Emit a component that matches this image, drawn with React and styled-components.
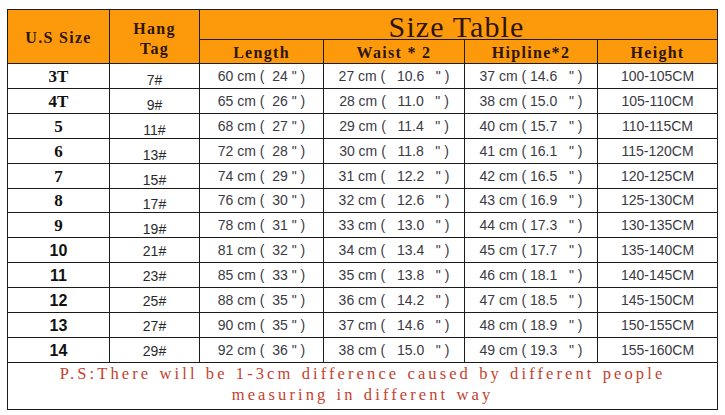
import React from 'react'
import styled, { createGlobalStyle } from 'styled-components'

const GlobalStyle = createGlobalStyle`
  html, body {
    margin: 0;
    padding: 0;
    background: #ffffff;
  }
`

const Page = styled.div`
  padding: 9px 0 0 7px;
`

const Grid = styled.div`
  display: grid;
  grid-template-columns: 102px 90px 124px 141px 133px 120px;
  grid-template-rows: 30px 24px repeat(12, 24.92px) 47px;
  width: 710px;
  border-top: 1px solid #1c1c1c;
  border-left: 1px solid #1c1c1c;
`

const Cell = styled.div`
  box-sizing: border-box;
  border-right: 1px solid #1c1c1c;
  border-bottom: 1px solid #1c1c1c;
  display: flex;
  align-items: center;
  justify-content: center;
  white-space: pre;
  overflow: hidden;
`

const HeadCell = styled(Cell)`
  background: #fd9a0c;
  color: #2e1503;
  font-family: "Liberation Serif", serif;
  font-weight: bold;
  font-size: 16px;
  letter-spacing: 1.3px;
  line-height: 20px;
  text-align: center;
  grid-row: ${({ $rows }) => $rows || 'auto'};
  grid-column: ${({ $cols }) => $cols || 'auto'};
  padding-top: ${({ $pt }) => $pt || 0}px;
`

const Title = styled(HeadCell)`
  font-weight: normal;
  font-size: 30px;
  line-height: 27px;
  letter-spacing: 1.1px;
  overflow: visible;
  padding: 3px 4px 0 0;
`

const SizeCell = styled(Cell)`
  font-family: ${({ $old }) => ($old ? '"Liberation Serif", serif' : '"Liberation Sans", sans-serif')};
  font-weight: bold;
  font-size: ${({ $old }) => ($old ? 17 : 16)}px;
  color: #111;
  padding-top: 2px;
`

const TagCell = styled(Cell)`
  font-family: "Liberation Sans", sans-serif;
  font-size: 14px;
  color: #2a2a2a;
  padding-top: ${({ $old }) => ($old ? 8 : 2)}px;
`

const MeasureCell = styled(Cell)`
  font-family: "Liberation Sans", sans-serif;
  font-size: 14px;
  color: #3a3a44;
`

const Note = styled.div`
  grid-column: 1 / -1;
  box-sizing: border-box;
  border-right: 1px solid #1c1c1c;
  border-bottom: 1px solid #1c1c1c;
  padding-top: 0;
  font-family: "Liberation Serif", serif;
  font-size: 16.5px;
  letter-spacing: 3.1px;
  word-spacing: 1px;
  line-height: 21px;
  color: #c5412e;
  text-align: center;
`

const rows = [
  ['3T', '7#', '60 cm (  24 " )', '27 cm (   10.6   " )', '37 cm ( 14.6   " )', '100-105CM', true],
  ['4T', '9#', '65 cm (  26 " )', '28 cm (   11.0   " )', '38 cm ( 15.0   " )', '105-110CM', true],
  ['5', '11#', '68 cm (  27 " )', '29 cm (   11.4   " )', '40 cm ( 15.7   " )', '110-115CM', true],
  ['6', '13#', '72 cm (  28 " )', '30 cm (   11.8   " )', '41 cm ( 16.1   " )', '115-120CM', true],
  ['7', '15#', '74 cm (  29 " )', '31 cm (   12.2   " )', '42 cm ( 16.5   " )', '120-125CM', true],
  ['8', '17#', '76 cm (  30 " )', '32 cm (   12.6   " )', '43 cm ( 16.9   " )', '125-130CM', true],
  ['9', '19#', '78 cm (  31 " )', '33 cm (   13.0   " )', '44 cm ( 17.3   " )', '130-135CM', true],
  ['10', '21#', '81 cm (  32 " )', '34 cm (   13.4   " )', '45 cm ( 17.7   " )', '135-140CM', false],
  ['11', '23#', '85 cm (  33 " )', '35 cm (   13.8   " )', '46 cm ( 18.1   " )', '140-145CM', false],
  ['12', '25#', '88 cm (  35 " )', '36 cm (   14.2   " )', '47 cm ( 18.5   " )', '145-150CM', false],
  ['13', '27#', '90 cm (  35 " )', '37 cm (   14.6   " )', '48 cm ( 18.9   " )', '150-155CM', false],
  ['14', '29#', '92 cm (  36 " )', '38 cm (   15.0   " )', '49 cm ( 19.3   " )', '155-160CM', false],
]

export default function App() {
  return (
    <Page>
      <GlobalStyle />
      <Grid>
        {/* header */}
        <HeadCell $rows="1 / 3" $cols="1" $pt={2}>U.S Size</HeadCell>
        <HeadCell $rows="1 / 3" $cols="2" $pt={4}>{'Hang\nTag'}</HeadCell>
        <Title $rows="1" $cols="3 / 7">Size Table</Title>
        <HeadCell $pt={3}>Length</HeadCell>
        <HeadCell $pt={3}>Waist * 2</HeadCell>
        <HeadCell $pt={3}>Hipline*2</HeadCell>
        <HeadCell $pt={3}>Height</HeadCell>

        {/* body */}
        {rows.map(([size, tag, length, waist, hip, height, old]) => (
          <React.Fragment key={size}>
            <SizeCell $old={old}>{size}</SizeCell>
            <TagCell $old={old}>{tag}</TagCell>
            <MeasureCell>{length}</MeasureCell>
            <MeasureCell>{waist}</MeasureCell>
            <MeasureCell>{hip}</MeasureCell>
            <MeasureCell>{height}</MeasureCell>
          </React.Fragment>
        ))}

        <Note>
          P.S:There will be 1-3cm difference caused by different people
          <br />
          measuring in different way
        </Note>
      </Grid>
    </Page>
  )
}
